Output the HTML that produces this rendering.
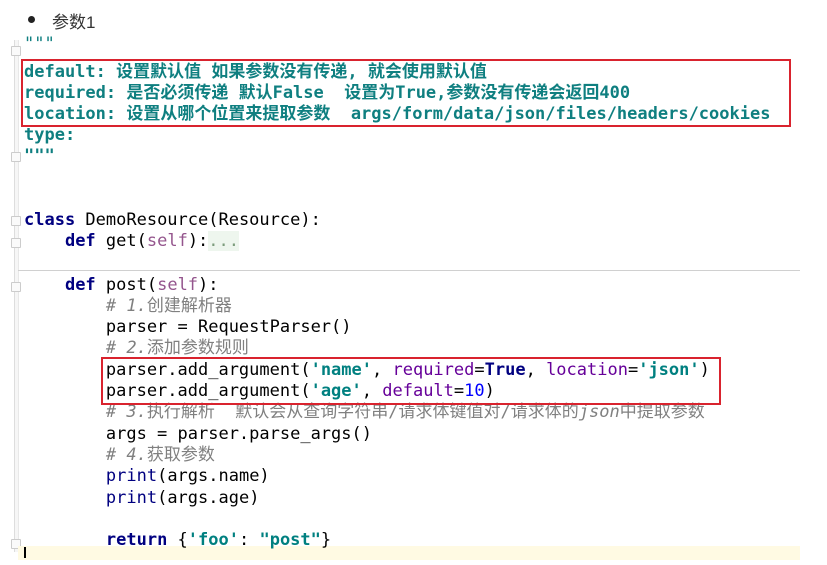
<!DOCTYPE html>
<html><head><meta charset="utf-8"><style>
body{margin:0;width:827px;height:565px;background:#fff;position:relative;overflow:hidden;font-family:"DejaVu Sans Mono","Liberation Mono","Noto Sans CJK SC",monospace;}
.bul{position:absolute;left:30px;top:8px;font:17px "Liberation Sans","Noto Sans CJK SC",sans-serif;color:#333}
.bul:before{content:"";position:absolute;left:-2px;top:8px;width:7px;height:7px;border-radius:50%;background:#222}
.bul span{margin-left:22px}
.l{position:absolute;left:24px;font-size:17px;line-height:21px;white-space:pre;color:#000}
.doc{color:#0f7f80;font-weight:bold}
.kw{color:#000080;font-weight:bold}
.sf{color:#94558d}
.st{color:#008080;font-weight:bold}
.cm{color:#808080;font-style:italic}
.cm b{font-weight:normal;font-style:normal}
.num{color:#0000ff}
.kp{color:#660099}
.gut{position:absolute;left:14px;top:40px;width:3px;height:512px;border-left:1px solid #ddd;border-right:1px solid #e8e8e8;background:#f6f6f6}
.fold{position:absolute;left:11px;width:8px;height:8px;border:1px solid #ccc;background:#fafafa;border-radius:1px}
.box{position:absolute;border:2px solid #d9232e}
</style></head><body>
<div class="bul"><span>参数1</span></div>
<div class="gut"></div>
<div class="fold" style="top:46px"></div>
<div class="fold" style="top:152px"></div>
<div class="fold" style="top:216px"></div>
<div class="fold" style="top:238px"></div>
<div class="fold" style="top:282px"></div>
<div class="fold" style="top:539px"></div>
<div style="position:absolute;left:18px;top:270px;width:782px;height:1px;background:#d0d0d0"></div>
<div style="position:absolute;left:18px;top:546px;width:782px;height:14px;background:#fffae3"></div>
<div style="position:absolute;left:24px;top:547px;width:2px;height:11px;background:#000"></div>
<div class="l doc" style="top:34px;font-weight:normal">"""</div>
<div class="l doc" style="top:62px">default: 设置默认值 如果参数没有传递, 就会使用默认值</div>
<div class="l doc" style="top:83px">required: 是否必须传递 默认False  设置为True,参数没有传递会返回400</div>
<div class="l doc" style="top:104px">location: 设置从哪个位置来提取参数  args/form/data/json/files/headers/cookies</div>
<div class="l doc" style="top:125px">type:</div>
<div class="l doc" style="top:146px">"""</div>
<div class="l" style="top:210px"><span class="kw">class</span> DemoResource(Resource):</div>
<div class="l" style="top:231px">    <span class="kw">def</span> get(<span class="sf">self</span>):<span style="color:#7c9c7c;background:#eef6ee">...</span></div>
<div class="l" style="top:275px">    <span class="kw">def</span> post(<span class="sf">self</span>):</div>
<div class="l cm" style="top:296px">        # 1.<b>创建解析器</b></div>
<div class="l" style="top:317px">        parser = RequestParser()</div>
<div class="l cm" style="top:338px">        # 2.<b>添加参数规则</b></div>
<div class="l" style="top:360px">        parser.add_argument(<span class="st">'name'</span>, <span class="kp">required</span>=<span class="kw">True</span>, <span class="kp">location</span>=<span class="st">'json'</span>)</div>
<div class="l" style="top:381px">        parser.add_argument(<span class="st">'age'</span>, <span class="kp">default</span>=<span class="num">10</span>)</div>
<div class="l cm" style="top:402px">        # 3.<b>执行解析  默认会从查询字符串/请求体键值对/请求体的</b>json<b>中提取参数</b></div>
<div class="l" style="top:424px">        args = parser.parse_args()</div>
<div class="l cm" style="top:445px">        # 4.<b>获取参数</b></div>
<div class="l" style="top:466px">        <span style="color:#000080">print</span>(args.name)</div>
<div class="l" style="top:488px">        <span style="color:#000080">print</span>(args.age)</div>
<div class="l" style="top:530px">        <span class="kw">return</span> {<span class="st">'foo'</span>: <span class="st">"post"</span>}</div>
<div class="box" style="left:21px;top:59px;width:766px;height:64px"></div>
<div class="box" style="left:101px;top:357px;width:616px;height:44px"></div>
</body></html>
